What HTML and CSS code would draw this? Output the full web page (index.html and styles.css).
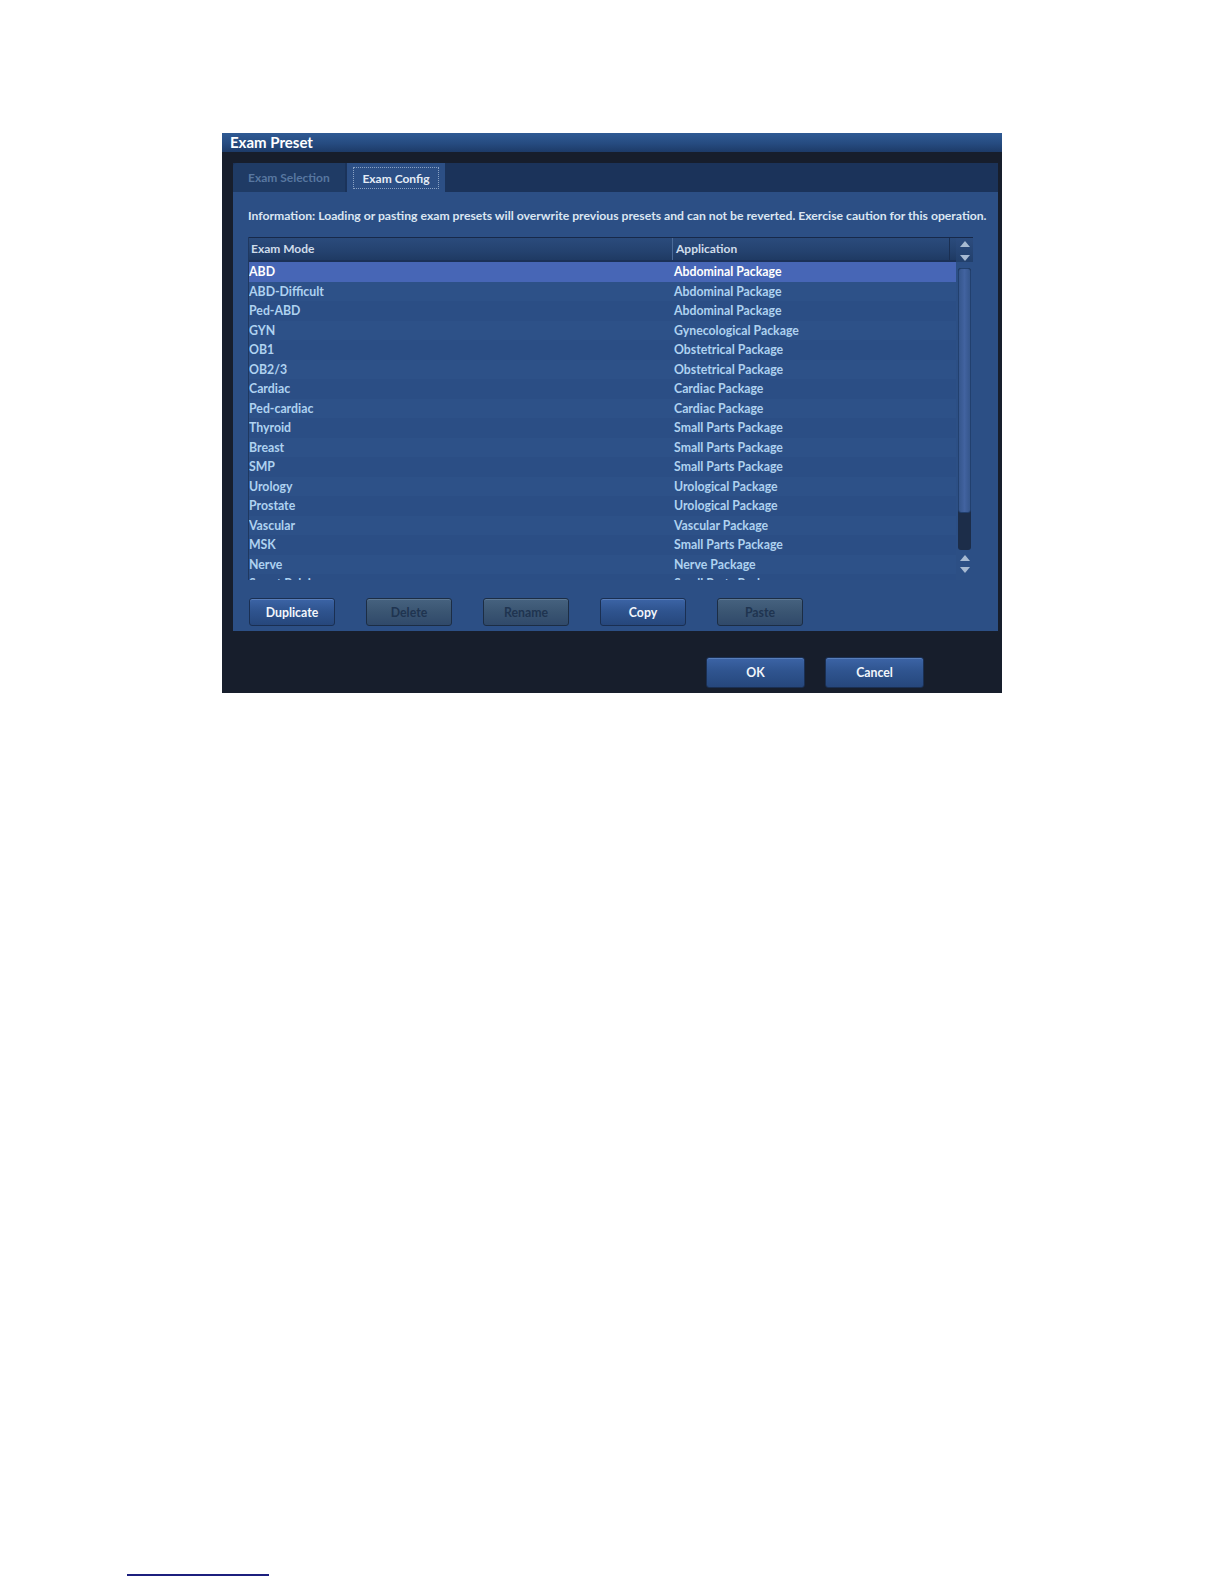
FILE: index.html
```html
<!DOCTYPE html>
<html>
<head>
<meta charset="utf-8">
<title>Exam Preset</title>
<link rel="stylesheet" href="styles.css">
</head>
<body>
<div class="page">
  <div class="dialog">
    <div class="titlebar">Exam Preset</div>
    <div class="panel">
      <div class="tabbar">
        <div class="tab tab-inactive">Exam Selection</div>
        <div class="tab tab-active"><span class="focus">Exam Config</span></div>
        <div class="tab-rest"></div>
      </div>
      <div class="content">
        <div class="info">Information: Loading or pasting exam presets will overwrite previous presets and can not be reverted. Exercise caution for this operation.</div>
        <div class="tablewrap">
          <div class="table">
            <div class="thead">
              <div class="th col1">Exam Mode</div>
              <div class="th col2">Application</div>
            </div>
            <div class="tbody">
              <div class="row selected"><span class="col1">ABD</span><span class="col2">Abdominal Package</span></div>
              <div class="row"><span class="col1">ABD-Difficult</span><span class="col2">Abdominal Package</span></div>
              <div class="row alt"><span class="col1">Ped-ABD</span><span class="col2">Abdominal Package</span></div>
              <div class="row"><span class="col1">GYN</span><span class="col2">Gynecological Package</span></div>
              <div class="row alt"><span class="col1">OB1</span><span class="col2">Obstetrical Package</span></div>
              <div class="row"><span class="col1">OB2/3</span><span class="col2">Obstetrical Package</span></div>
              <div class="row alt"><span class="col1">Cardiac</span><span class="col2">Cardiac Package</span></div>
              <div class="row"><span class="col1">Ped-cardiac</span><span class="col2">Cardiac Package</span></div>
              <div class="row alt"><span class="col1">Thyroid</span><span class="col2">Small Parts Package</span></div>
              <div class="row"><span class="col1">Breast</span><span class="col2">Small Parts Package</span></div>
              <div class="row alt"><span class="col1">SMP</span><span class="col2">Small Parts Package</span></div>
              <div class="row"><span class="col1">Urology</span><span class="col2">Urological Package</span></div>
              <div class="row alt"><span class="col1">Prostate</span><span class="col2">Urological Package</span></div>
              <div class="row"><span class="col1">Vascular</span><span class="col2">Vascular Package</span></div>
              <div class="row alt"><span class="col1">MSK</span><span class="col2">Small Parts Package</span></div>
              <div class="row"><span class="col1">Nerve</span><span class="col2">Nerve Package</span></div>
              <div class="row alt"><span class="col1">Smart Pelvic</span><span class="col2">Small Parts Package</span></div>
            </div>
          </div>
          <div class="scrollbar">
            <div class="sb-head">
              <span class="arrow up"></span>
              <span class="arrow down"></span>
            </div>
            <div class="sb-track">
              <div class="sb-thumb"></div>
            </div>
            <div class="sb-foot">
              <span class="arrow up"></span>
              <span class="arrow down"></span>
            </div>
          </div>
        </div>
        <div class="actions">
          <button class="btn">Duplicate</button>
          <button class="btn disabled">Delete</button>
          <button class="btn disabled">Rename</button>
          <button class="btn">Copy</button>
          <button class="btn disabled">Paste</button>
        </div>
      </div>
    </div>
    <div class="footer">
      <button class="btn big">OK</button>
      <button class="btn big">Cancel</button>
    </div>
  </div>
  <div class="footnote-rule"></div>
</div>
</body>
</html>
```

FILE: styles.css
```css
html, body {
  margin: 0;
  padding: 0;
  background: #ffffff;
}

.page {
  padding: 133px 0 0 222px;
  font-family: Lato, "Open Sans", sans-serif;
  font-weight: bold;
}

.dialog {
  width: 780px;
  height: 560px;
  background: #171e2c;
  display: flex;
  flex-direction: column;
  box-sizing: border-box;
}

.titlebar {
  height: 19px;
  line-height: 18px;
  padding-left: 8px;
  font-size: 15px;
  color: #ffffff;
  background: linear-gradient(to bottom, #2f5a94 0%, #264b80 55%, #1d3b68 100%);
}

.panel {
  margin: 11px 4px 0 11px;
  display: flex;
  flex-direction: column;
  background: #2c4f85;
}

.tabbar {
  height: 29px;
  display: flex;
  background: #1b335a;
}

.tab {
  font-size: 12px;
  display: flex;
  align-items: center;
}

.tab-inactive {
  width: 112px;
  padding-left: 15px;
  box-sizing: border-box;
  color: #5877a0;
  background: #1f3b65;
  border-top-left-radius: 4px;
}

.tab-active {
  width: 98px;
  margin-left: 2px;
  justify-content: center;
  background: #2c4f85;
  color: #e4ecf6;
}

.tab-active .focus {
  display: block;
  width: 86px;
  height: 22px;
  line-height: 22px;
  text-align: center;
  border: 1px dotted #8aa2c4;
  box-sizing: border-box;
}

.tab-rest {
  flex: 1;
}

.content {
  padding: 0 0 5px 15px;
  display: flex;
  flex-direction: column;
}

.info {
  font-size: 12.2px;
  color: #dbe6f2;
  height: 45px;
  line-height: 48px;
  white-space: nowrap;
}

.tablewrap {
  display: flex;
  width: 725px;
  height: 343px;
}

.table {
  width: 708px;
  display: flex;
  flex-direction: column;
  border-left: 1px solid #1f3860;
  box-sizing: border-box;
}

.thead {
  height: 25px;
  display: flex;
  background: linear-gradient(to bottom, #2b4b7c 0%, #24426f 60%, #1f3a63 100%);
  border-top: 1px solid #17294a;
  border-bottom: 2px solid #1b3158;
  box-sizing: border-box;
}

.th {
  font-size: 12px;
  color: #cfdcea;
  line-height: 22px;
}

.th.col1 {
  width: 424px;
  padding-left: 2px;
  box-sizing: border-box;
  border-right: 1px solid #4a6a98;
}

.th.col2 {
  flex: 1;
  padding-left: 3px;
  border-right: 1px solid #1a2f52;
  margin-right: 6px;
}

.tbody {
  height: 318px;
  overflow: hidden;
  background: #2c5087;
}

.row {
  height: 19.5px;
  line-height: 19.5px;
  display: flex;
  font-size: 12.3px;
  color: #afd2f0;
  background: #2d5188;
}

.row.alt {
  background: #2b4e85;
}

.row.selected {
  background: #4766b6;
  color: #ffffff;
}

.row .col1 {
  width: 425px;
  box-sizing: border-box;
}

.row .col2 {
  flex: 1;
}

.scrollbar {
  width: 17px;
  display: flex;
  flex-direction: column;
  align-items: center;
}

.sb-head {
  height: 25px;
  width: 17px;
  display: flex;
  flex-direction: column;
  align-items: center;
  justify-content: space-between;
  padding: 3px 0 1px;
  box-sizing: border-box;
  background: linear-gradient(to bottom, #2c4c7e, #22406c);
  border-top: 1px solid #17294a;
}

.arrow {
  display: block;
  width: 0;
  height: 0;
  border-left: 5px solid transparent;
  border-right: 5px solid transparent;
}

.arrow.up {
  border-bottom: 6px solid #a7bad2;
}

.arrow.down {
  border-top: 6px solid #a7bad2;
}

.sb-track {
  width: 13px;
  flex: 1;
  margin-top: 6px;
  background: #1c2d49;
  border-radius: 3px;
  display: flex;
  flex-direction: column;
}

.sb-thumb {
  height: 243px;
  background: linear-gradient(to right, #35568c, #4263a0 50%, #35568c);
  border: 1px solid #22406e;
  border-radius: 3px;
}

.sb-foot {
  height: 30px;
  width: 17px;
  display: flex;
  flex-direction: column;
  align-items: center;
  justify-content: space-around;
  padding: 2px 0 4px;
  box-sizing: border-box;
}

.actions {
  display: flex;
  gap: 31px;
  margin-top: 18px;
  padding-left: 1px;
}

.btn {
  font-family: Lato, "Open Sans", sans-serif;
  font-weight: bold;
  font-size: 12.3px;
  width: 86px;
  height: 28px;
  padding: 0;
  color: #f2f6fb;
  background: linear-gradient(to bottom, #3c64a6 0%, #2f548f 45%, #26477c 100%);
  border: 1px solid #1a2f52;
  border-radius: 3px;
  box-shadow: inset 0 1px 0 rgba(140, 175, 225, 0.35);
}

.btn.disabled {
  color: #1f3450;
  background: linear-gradient(to bottom, #46627f 0%, #3a5572 50%, #30496a 100%);
  border-color: #1c2d44;
  box-shadow: inset 0 1px 0 rgba(150, 175, 200, 0.3);
}

.footer {
  display: flex;
  justify-content: flex-end;
  gap: 20px;
  padding-right: 78px;
  margin-top: 26px;
}

.btn.big {
  width: 99px;
  height: 31px;
}

.footnote-rule {
  width: 142px;
  height: 2px;
  background: #1c1f7e;
  margin: 881px 0 0 -95px;
}
```
